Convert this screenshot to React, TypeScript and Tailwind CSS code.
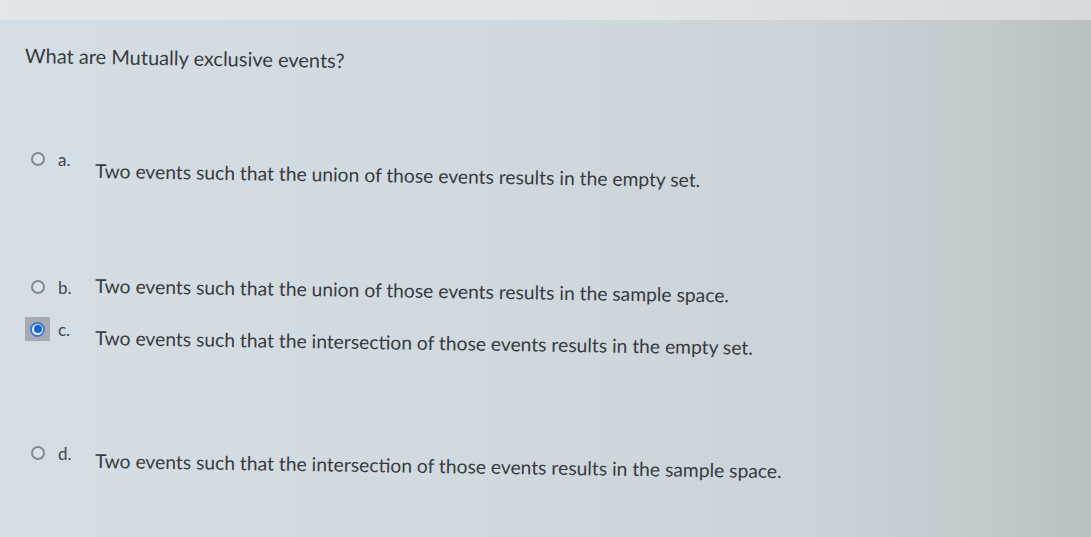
import React from 'react'

type Option = {
  key: string
  label: string
  text: string
  checked?: boolean
  rowH: string
  textMt: string
}

const OPTIONS: Option[] = [
  {
    key: 'a',
    label: 'a.',
    text: 'Two events such that the union of those events results in the empty set.',
    rowH: 'h-[128px]',
    textMt: 'mt-[9px]',
  },
  {
    key: 'b',
    label: 'b.',
    text: 'Two events such that the union of those events results in the sample space.',
    rowH: 'h-[42px]',
    textMt: '-mt-[4px]',
  },
  {
    key: 'c',
    label: 'c.',
    text: 'Two events such that the intersection of those events results in the empty set.',
    checked: true,
    rowH: 'h-[124px]',
    textMt: 'mt-[6px]',
  },
  {
    key: 'd',
    label: 'd.',
    text: 'Two events such that the intersection of those events results in the sample space.',
    rowH: 'h-[92px]',
    textMt: 'mt-[5px]',
  },
]

const Radio = ({ checked }: { checked?: boolean }) => {
  if (checked) {
    return (
      <span className="-mx-[6px] -my-[5px] flex h-[24px] w-[25px] items-center justify-center bg-[#a7abb0]">
        <span className="flex h-[15px] w-[15px] items-center justify-center rounded-full border-[2px] border-[#3a78dc] bg-[#e8eef6]">
          <span className="h-[8px] w-[8px] rounded-full bg-[#1f5fd0]" />
        </span>
      </span>
    )
  }
  return <span className="block h-[14px] w-[14px] rounded-full border-2 border-[#858a8f] bg-[#dde2e6]" />
}

export default function App() {
  return (
    <div
      className="h-[537px] w-[1091px] overflow-hidden bg-[linear-gradient(90deg,#d5dee4_0%,#d0d9df_45%,#cbd3d8_75%,#c3cace_90%,#b9c0c4_100%)] text-[#383c40]"
      style={{ fontFamily: 'Lato, "Open Sans", sans-serif' }}
    >
      <div className="h-[20px] bg-[linear-gradient(90deg,#e3e6e9_0%,#e1e4e7_60%,#d8dbde_100%)]" />
      <div className="h-[131px] px-[25px] pt-[24px]">
        <p className="origin-left rotate-[0.9deg] text-[20px] leading-[22px]">
          What are Mutually exclusive events?
        </p>
      </div>
      <div className="pl-[31px]">
        {OPTIONS.map((o) => (
          <div key={o.key} className={`flex items-start ${o.rowH}`}>
            <div className="mt-px flex w-[27px] shrink-0">
              <Radio checked={o.checked} />
            </div>
            <span className="w-[37px] shrink-0 text-[17px] leading-[18px] text-[#43474b]">{o.label}</span>
            <span className={`origin-left rotate-[0.85deg] whitespace-nowrap text-[19.25px] leading-[22px] ${o.textMt}`}>
              {o.text}
            </span>
          </div>
        ))}
      </div>
    </div>
  )
}
